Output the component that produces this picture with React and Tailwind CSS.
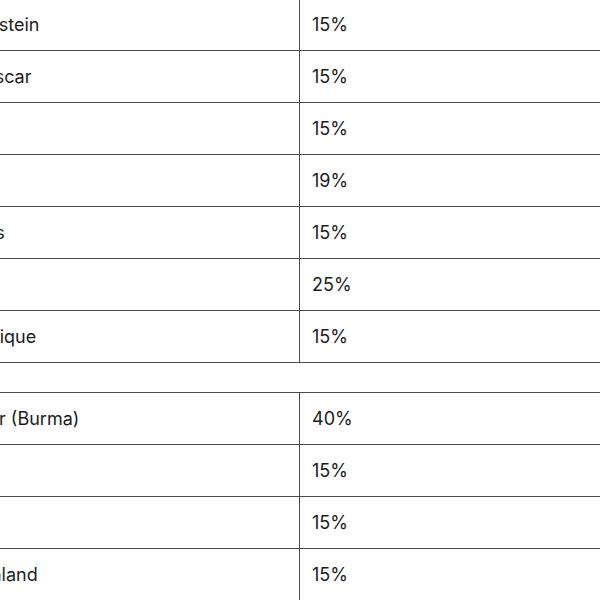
import React from 'react';

const rows = [
  { country: 'Liechtenstein', rate: '15%' },
  { country: 'Madagascar', rate: '15%' },
  { country: 'Malawi', rate: '15%' },
  { country: 'Mali', rate: '19%' },
  { country: 'Mauritius', rate: '15%' },
  { country: 'Malta', rate: '25%' },
  { country: 'Mozambique', rate: '15%' },
  { spacer: true },
  { country: 'Myanmar (Burma)', rate: '40%' },
  { country: 'Nauru', rate: '15%' },
  { country: 'Nepal', rate: '15%' },
  { country: 'New Zealand', rate: '15%' },
];

const App = () => {
  return (
    <div className="w-[600px] h-[600px] overflow-hidden bg-white">
      <div
        className="-mt-px -ml-[86px] w-[686px] text-[18px] text-[#1c1c1c]"
        style={{ fontFamily: 'Inter, "Liberation Sans", sans-serif' }}
      >
        {rows.map((row, i) =>
          row.spacer ? (
            <div key={i} className="h-[30px] border-b border-[#4a4a4a]" />
          ) : (
            <div key={i} className="flex h-[52px] border-b border-[#4a4a4a]">
              <div className="w-[386px] shrink-0 flex items-center pl-3 border-r border-[#4a4a4a]">
                {row.country}
              </div>
              <div className="flex-1 flex items-center pl-3">{row.rate}</div>
            </div>
          )
        )}
      </div>
    </div>
  );
};

export default App;
